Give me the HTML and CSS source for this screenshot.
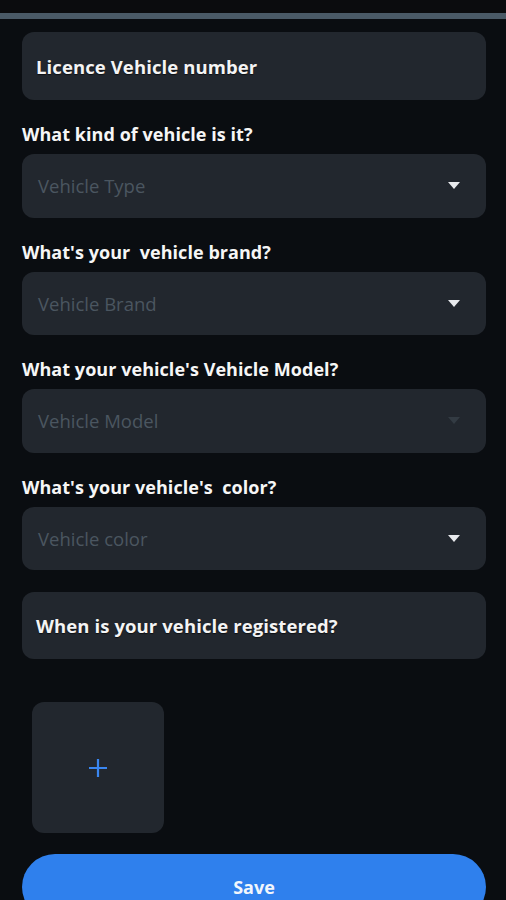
FILE: index.html
```html
<!DOCTYPE html>
<html lang="en">
<head>
<meta charset="utf-8">
<title>Vehicle</title>
<link rel="stylesheet" href="styles.css">
</head>
<body>
<div class="topbar"></div>
<div class="rule"></div>
<main class="form">
  <div class="field field-first"><span class="field-text">Licence Vehicle number</span></div>

  <label class="label">What kind of vehicle is it?</label>
  <div class="select"><span class="placeholder">Vehicle Type</span><span class="caret"></span></div>

  <label class="label">What's your&nbsp; vehicle brand?</label>
  <div class="select"><span class="placeholder">Vehicle Brand</span><span class="caret"></span></div>

  <label class="label">What your vehicle's Vehicle Model?</label>
  <div class="select"><span class="placeholder">Vehicle Model</span><span class="caret caret-dim"></span></div>

  <label class="label">What's your vehicle's&nbsp; color?</label>
  <div class="select"><span class="placeholder">Vehicle color</span><span class="caret"></span></div>

  <div class="field field-date"><span class="field-text">When is your vehicle registered?</span></div>

  <div class="upload">
    <svg width="22" height="22" viewBox="0 0 22 22"><path d="M11 2v18M2 11h18" stroke="#3a86f0" stroke-width="2.2" fill="none"/></svg>
  </div>

  <button class="save">Save</button>
</main>
</body>
</html>
```
FILE: styles.css
```css
html, body {
  margin: 0;
  padding: 0;
  background: #0a0d11;
  height: 900px;
  overflow: hidden;
}
body {
  font-family: "Open Sans", "Lato", sans-serif;
  color: #f2f3f5;
}
.topbar {
  height: 13px;
  background: #0b0c0e;
}
.rule {
  height: 6px;
  background: #4a5a66;
}
.form {
  padding: 13px 20px 0 22px;
  display: flex;
  flex-direction: column;
}
.field {
  height: 68px;
  border-radius: 12px;
  background: #22272e;
  display: flex;
  align-items: center;
  padding-left: 14px;
  box-sizing: border-box;
}
.field-text {
  font-size: 18.5px;
  font-weight: 700;
  letter-spacing: 0.1px;
  color: #f4f4f4;
  text-shadow: 0 1px 1px rgba(0,0,0,0.6);
}
.label {
  display: block;
  font-size: 18px;
  font-weight: 700;
  letter-spacing: 0.05px;
  line-height: 20px;
  margin: 24px 0 10px 0;
  color: #f6f6f6;
}
.select {
  height: 63.5px;
  border-radius: 12px;
  background: #22272e;
  display: flex;
  align-items: center;
  justify-content: space-between;
  padding: 0 26px 0 16px;
  box-sizing: border-box;
}
.placeholder {
  font-size: 18.5px;
  color: #4b5660;
}
.caret {
  width: 0;
  height: 0;
  border-left: 6.5px solid transparent;
  border-right: 6.5px solid transparent;
  border-top: 7px solid #e8eaed;
}
.caret-dim {
  border-top-color: #333b43;
}
.field-date {
  margin-top: 22px;
  height: 67px;
}
.upload {
  margin: 43px 0 0 10px;
  width: 132px;
  height: 131px;
  border-radius: 12px;
  background: #22272e;
  display: flex;
  align-items: center;
  justify-content: center;
}
.save {
  margin-top: 21px;
  height: 66px;
  border: none;
  border-radius: 33px;
  background: #2f80ed;
  color: #f2f6fc;
  font-family: "Open Sans", "Lato", sans-serif;
  font-size: 18px;
  font-weight: 700;
  padding: 0;
}
```
